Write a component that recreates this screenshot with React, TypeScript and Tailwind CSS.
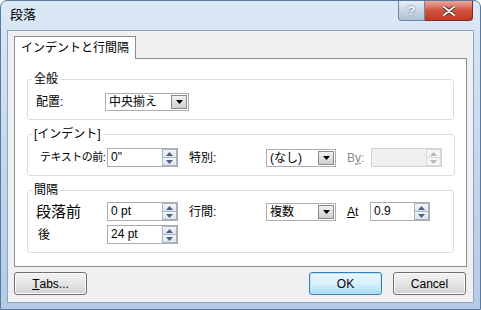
import React from "react"

const font = { fontFamily: '"Liberation Sans", "Noto Sans CJK JP", sans-serif' }

function Arrow({ up, color = "#4d6185" }: { up?: boolean; color?: string }) {
  return (
    <svg width="7" height="4" viewBox="0 0 7 4">
      <path d={up ? "M0 4 L3.5 0 L7 4 Z" : "M0 0 L7 0 L3.5 4 Z"} fill={color} />
    </svg>
  )
}

function Combo({ value, width }: { value: string; width: string }) {
  return (
    <div className={`flex h-[18px] ${width} items-stretch border border-[#abadb3] bg-white`}>
      <div className="flex-1 whitespace-nowrap pl-[3px] text-[12px] leading-[16px] text-black">{value}</div>
      <div className="m-[1px] flex w-[16px] items-center justify-center border border-[#8a8a8a] bg-gradient-to-b from-[#f2f2f2] to-[#cfcfcf]">
        <Arrow color="#000" />
      </div>
    </div>
  )
}

function Spin({ value, width, disabled }: { value: string; width: string; disabled?: boolean }) {
  return (
    <div
      className={`flex h-[19px] ${width} items-stretch border ${
        disabled ? "border-[#cfd3d8] bg-[#f0f0f0]" : "border-[#abadb3] bg-white"
      }`}
    >
      <div className="flex-1 whitespace-nowrap pl-[3px] text-[12px] leading-[17px] text-black">{value}</div>
      <div className="flex w-[15px] flex-col">
        <div
          className={`flex flex-1 items-center justify-center border ${
            disabled ? "border-[#dadada] bg-[#f4f4f4]" : "border-[#a9b4c4] bg-gradient-to-b from-[#f4f6f9] to-[#dde3eb]"
          }`}
        >
          <Arrow up color={disabled ? "#b8b8b8" : "#4d6185"} />
        </div>
        <div
          className={`flex flex-1 items-center justify-center border border-t-0 ${
            disabled ? "border-[#dadada] bg-[#f4f4f4]" : "border-[#a9b4c4] bg-gradient-to-b from-[#f4f6f9] to-[#dde3eb]"
          }`}
        >
          <Arrow color={disabled ? "#b8b8b8" : "#4d6185"} />
        </div>
      </div>
    </div>
  )
}

function Group({ title, children }: { title: string; children: React.ReactNode }) {
  return (
    <fieldset className="rounded-[3px] border border-[#d5dfe5] px-[12px] pb-[8px] pt-[7px]">
      <legend className="-ml-[8px] px-[2px] text-[12px] leading-[14px] text-black">{title}</legend>
      {children}
    </fieldset>
  )
}

function Button({ label, ul, primary }: { label: string; ul?: string; primary?: boolean }) {
  return (
    <div
      className={`flex h-[23px] w-[73px] items-center justify-center rounded-[3px] border text-[12px] text-black ${
        primary
          ? "border-[#3c7fb1] bg-gradient-to-b from-[#eaf6fd] via-[#d9f0fc] to-[#a7d9f5] shadow-[inset_0_0_0_1px_#bde6fd]"
          : "border-[#707070] bg-gradient-to-b from-[#f2f2f2] via-[#e6e6e6] to-[#d0d0d0] shadow-[inset_0_0_0_1px_#fcfcfc]"
      }`}
    >
      {ul && <span className="underline">{ul}</span>}
      {label}
    </div>
  )
}

export default function App() {
  return (
    <div
      style={font}
      className="flex h-[310px] w-[481px] flex-col overflow-hidden rounded-t-[7px] border border-[#5a7aa0] bg-gradient-to-b from-[#dbe8f6] via-[#c4d8ee] to-[#b3cbe6] px-[6px] pb-[6px]"
    >
      {/* title bar */}
      <div className="flex h-[29px] items-start justify-between">
        <div className="pl-[3px] pt-[6px] text-[13px] leading-[16px] text-black">段落</div>
        <div className="flex">
          <div className="flex h-[20px] w-[27px] items-center justify-center rounded-bl-[4px] border border-t-0 border-[#6d87a8] bg-gradient-to-b from-[#e6eef7] via-[#c9d6e6] to-[#b0c1d6] text-[13px] font-bold text-white [text-shadow:0_0_2px_#33415a]">
            ?
          </div>
          <div className="mr-[1px] flex h-[20px] w-[48px] items-center justify-center rounded-br-[4px] border border-l-0 border-t-0 border-[#7a2a22] bg-gradient-to-b from-[#e9a99b] via-[#d2523f] to-[#c23a22]">
            <svg width="12" height="10" viewBox="0 0 12 10">
              <path d="M1 1 L11 9 M11 1 L1 9" stroke="#3b1a14" strokeWidth="3.4" strokeLinecap="round" />
              <path d="M1 1 L11 9 M11 1 L1 9" stroke="#fff" strokeWidth="2" strokeLinecap="round" />
            </svg>
          </div>
        </div>
      </div>

      {/* client */}
      <div className="flex flex-1 flex-col border border-[#8ea3bc] bg-[#f0f0f0] px-[6px] pt-[5px]">
        <div className="flex">
          <div className="z-10 -mb-px flex h-[23px] w-[122px] items-center border border-b-0 border-[#898c95] bg-white pl-[6px] text-[12px] text-black">
            インデントと行間隔
          </div>
        </div>
        <div className="flex h-[209px] flex-col gap-[7px] border border-[#898c95] bg-white px-[12px] pt-[13px]">
          <Group title="全般">
            <div className="flex items-center">
              <div className="-ml-[4px] w-[69px] text-[12px] text-black">配置:</div>
              <Combo value="中央揃え" width="w-[84px]" />
            </div>
          </Group>
          <Group title="[インデント]">
            <div className="flex items-center">
              <div className="w-[67px] whitespace-nowrap text-[11px] tracking-[-0.5px] text-black">テキストの前:</div>
              <Spin value={'0"'} width="w-[71px]" />
              <div className="ml-[11px] w-[77px] text-[12px] text-black">特別:</div>
              <Combo value="(なし)" width="w-[70px]" />
              <div className="ml-[11px] w-[24px] text-[12px] text-[#8a8a8a]">
                B<span className="underline">y</span>:
              </div>
              <Spin value="" width="w-[71px]" disabled />
            </div>
          </Group>
          <Group title="間隔">
            <div className="-mt-[2px] flex flex-col gap-[4px]">
              <div className="flex items-center">
                <div className="-ml-[4px] w-[71px] whitespace-nowrap text-[15px] leading-[18px] text-black">段落前</div>
                <Spin value="0 pt" width="w-[71px]" />
                <div className="ml-[11px] w-[77px] text-[12px] text-black">行間:</div>
                <Combo value="複数" width="w-[70px]" />
                <div className="ml-[11px] w-[23px] text-[12px] text-black">
                  <span className="underline">A</span>t
                </div>
                <Spin value="0.9" width="w-[60px]" />
              </div>
              <div className="flex items-center">
                <div className="-ml-[2px] w-[69px] text-[12px] text-black">後</div>
                <Spin value="24 pt" width="w-[71px]" />
              </div>
            </div>
          </Group>
        </div>
        <div className="flex items-center justify-between pt-[5px]">
          <Button label="abs..." ul="T" />
          <div className="flex gap-[11px] pr-[1px]">
            <Button label="OK" primary />
            <Button label="Cancel" />
          </div>
        </div>
      </div>
    </div>
  )
}
